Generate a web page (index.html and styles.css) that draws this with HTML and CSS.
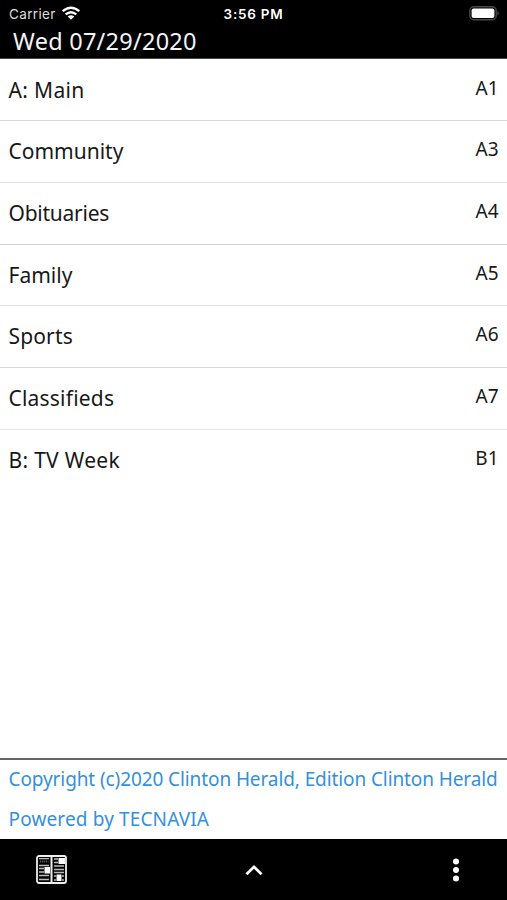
FILE: index.html
```html
<!DOCTYPE html>
<html lang="en">
<head>
<meta charset="utf-8">
<title>Clinton Herald</title>
<link rel="stylesheet" href="styles.css">
</head>
<body>
<div class="app">
  <header class="header">
    <div class="status">
      <div class="carrier"><span class="carrier-name">Carrier</span>
        <svg class="wifi" width="20" height="15" viewBox="0 0 20 15" fill="none" stroke="#fff" stroke-width="2.4"><path d="M1.7 5.2Q10 -1.8 18.3 5.2"/><path d="M4.7 8.4Q10 4 15.3 8.4"/><path d="M6.7 10.4Q10 7.9 13.3 10.4L10 13.8Z" fill="#fff" stroke="none"/></svg>
      </div>
      <span class="time">3:56 PM</span>
      <svg class="battery" width="31" height="15" viewBox="0 0 31 15"><rect x=".8" y=".8" width="26.4" height="13" rx="4" fill="none" stroke="#48484c" stroke-width="1.4"/><rect x="2.6" y="2.6" width="22.8" height="9.4" rx="2" fill="#fff"/><path d="M28.5 5Q31 7.3 28.5 9.6Z" fill="#55555a"/></svg>
    </div>
    <h1 class="date">Wed 07/29/2020</h1>
  </header>
  <ul class="sections">
    <li class="row"><span class="name main">A: Main</span><span class="page">A1</span></li>
    <li class="row soft"><span class="name community">Community</span><span class="page">A3</span></li>
    <li class="row strong"><span class="name obituaries">Obituaries</span><span class="page">A4</span></li>
    <li class="row soft"><span class="name family">Family</span><span class="page">A5</span></li>
    <li class="row"><span class="name sports">Sports</span><span class="page">A6</span></li>
    <li class="row soft"><span class="name classifieds">Classifieds</span><span class="page">A7</span></li>
    <li class="row"><span class="name tv">B: TV Week</span><span class="page">B1</span></li>
  </ul>
  <footer class="credits">
    <a class="credit copyright">Copyright (c)2020 Clinton Herald, Edition Clinton Herald</a>
    <a class="credit powered">Powered by TECNAVIA</a>
  </footer>
  <nav class="toolbar">
    <svg class="paper" width="31" height="29" viewBox="0 0 31 29"><rect x="1" y="1" width="29" height="27" rx="2" fill="#000" stroke="#eee" stroke-width="1.8"/><path d="M15.5 1V28" stroke="#eee" stroke-width="2"/><path d="M3 3.7H13M3 10.5H13M3 13.5H8M3 17H8M3 20.5H13M3 24.5H13M18 4H22M18 7.5H22M18 11H28M18 14.5H28M18 17.5H28M18 21H20M18 25H20M26 21H28M26 25H28" stroke="#bbb" stroke-width="1.3"/><path d="M8.5 12H14V18.5H8.5ZM22.5 3H29V9H22.5ZM20.5 19.5H25.5V26H20.5Z" fill="#fff"/><path d="M4 6.5H12.5" stroke="#555" stroke-width="2" stroke-dasharray="1.3 .7"/></svg>
    <svg class="up" width="18" height="12" viewBox="0 0 18 12" fill="none" stroke="#fff" stroke-width="2.7"><path d="M1.5 10.3L9 2.8L16.5 10.3"/></svg>
    <svg class="more" width="8" height="24" viewBox="0 0 8 24" fill="#fff"><circle cx="4" cy="3.5" r="3"/><circle cx="4" cy="12" r="3"/><circle cx="4" cy="20.5" r="3"/></svg>
  </nav>
</div>
</body>
</html>
```
FILE: styles.css
```css
* { box-sizing: border-box; }
body { margin: 0; background: #fff; font-family: "Noto Sans", sans-serif; color: #181818; }
.app { width: 507px; height: 900px; display: flex; flex-direction: column; overflow: hidden; }
.header { height: 59px; background: #000; color: #fff; flex: none; border-bottom: 1px solid #444; }
.status { height: 27px; display: grid; grid-template-columns: 1fr auto 1fr; align-items: center; padding: 0 7px; font-family: Inter, sans-serif; font-size: 13.5px; line-height: 27px; }
.carrier { display: flex; align-items: center; gap: 5px; padding-left: 2px; color: #ddd; letter-spacing: .35px; }
.carrier-name, .time { padding-top: 1px; }
.wifi, .battery { margin-bottom: 2px; }
.time { font-weight: 600; letter-spacing: .75px; }
.battery { justify-self: end; }
.date { margin: 0; padding-left: 13px; font-size: 23.5px; font-weight: 400; line-height: 29px; letter-spacing: .25px; white-space: nowrap; color: #f4f4f4; }
.sections { list-style: none; margin: 0; padding: .6px 0 0; flex: 1; }
.row { height: 61.7px; padding: 0 8px 0 8.5px; display: flex; justify-content: space-between; border-bottom: 1px solid #d9d9d9; white-space: nowrap; }
.row.soft { border-bottom-color: #e4e4e4; }
.row.strong { border-bottom-color: #cecece; }
.row:last-child { border-bottom: 0; }
.name { font-size: 21px; line-height: 61px; }
.main { letter-spacing: .35px; }
.obituaries { letter-spacing: -.25px; }
.sports { letter-spacing: .15px; }
.classifieds { letter-spacing: .2px; }
.tv { letter-spacing: .3px; }
.page { font-size: 19px; line-height: 57px; letter-spacing: .3px; }
.credits { height: 81px; flex: none; border-top: 2px solid #656565; padding-left: 8.5px; color: #3490dc; font-size: 19px; display: flex; flex-direction: column; white-space: nowrap; }
.credit { line-height: 42px; }
.copyright { line-height: 38px; letter-spacing: -.1px; }
.powered { letter-spacing: .14px; }
.toolbar { height: 61px; flex: none; background: #000; display: grid; grid-template-columns: 1fr auto 1fr; align-items: center; padding: 0 36px; }
.more { justify-self: end; margin-right: 11px; }
```
